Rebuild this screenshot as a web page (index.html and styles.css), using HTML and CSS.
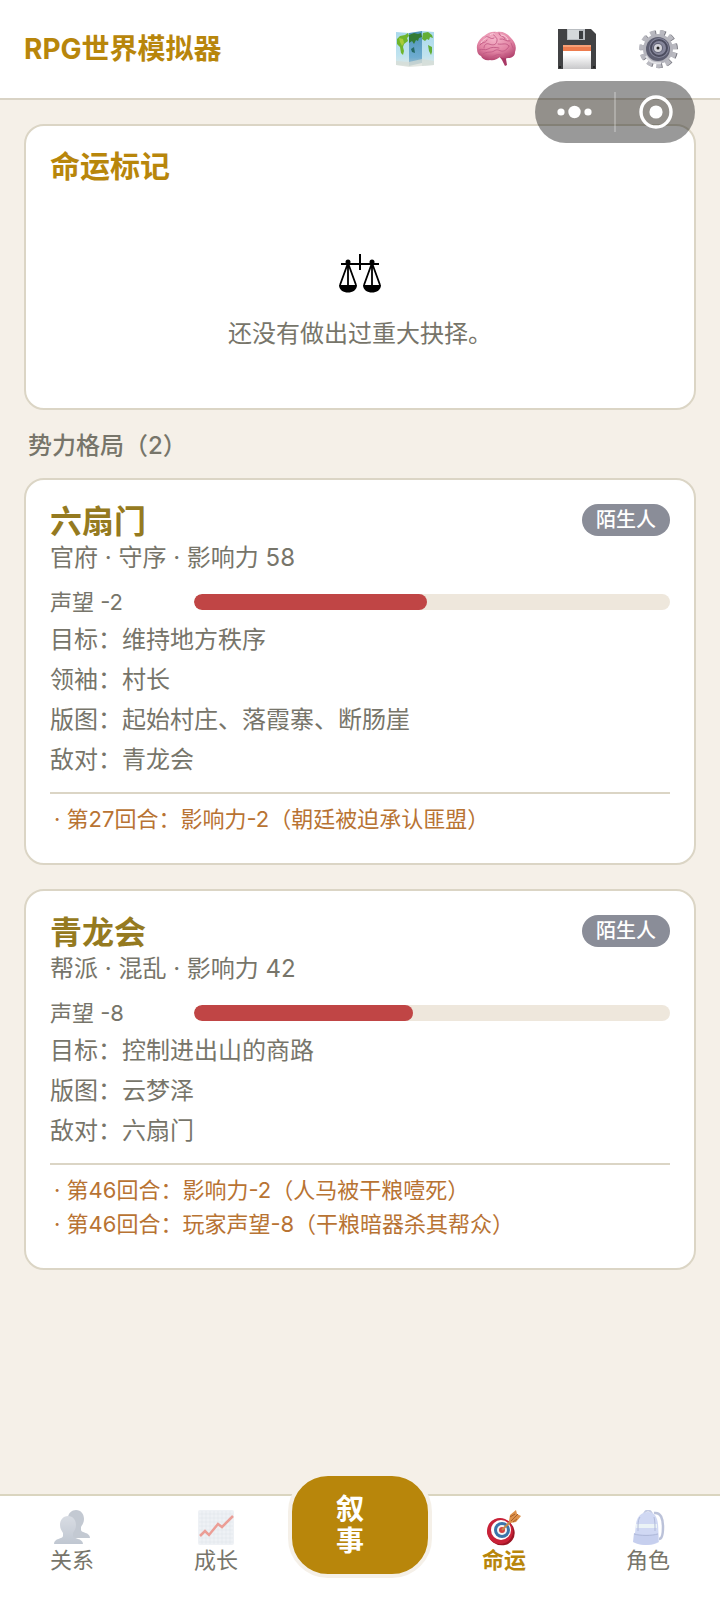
FILE: index.html
```
<!DOCTYPE html>
<html lang="zh-CN">
<head>
  <meta charset="UTF-8" />
  <meta name="viewport" content="width=device-width, initial-scale=1.0"/>
  <title>RPG世界模拟器</title>
  <link rel="stylesheet" href="styles.css">
</head>
<body>

  <!-- Mini program capsule -->
  <div class="capsule">
    <button class="capsule-btn" aria-label="更多">
      <svg width="48" height="40" viewBox="0 0 48 40" fill="#fff">
        <circle cx="10" cy="20" r="3.6"/><circle cx="23.5" cy="20" r="6.2"/><circle cx="37" cy="20" r="3.6"/>
      </svg>
    </button>
    <span class="capsule-line"></span>
    <button class="capsule-btn" aria-label="关闭">
      <svg width="40" height="40" viewBox="0 0 40 40">
        <circle cx="20" cy="20" r="15" fill="none" stroke="#fff" stroke-width="3.4"/>
        <circle cx="20" cy="20" r="6.6" fill="#fff"/>
      </svg>
    </button>
  </div>

  <header class="header">
    <h1>RPG世界模拟器</h1>
    <div class="tools">
      <button class="tool-btn" aria-label="地图">
        <svg width="40" height="40" viewBox="0 0 40 40">
          <defs>
            <linearGradient id="sea" x1="0" y1="0" x2="0" y2="1">
              <stop offset="0" stop-color="#a9d9ec"/><stop offset=".7" stop-color="#c0e3ef"/><stop offset="1" stop-color="#dfe8e6"/>
            </linearGradient>
            <linearGradient id="fold" x1="0" y1="0" x2="0" y2="1">
              <stop offset="0" stop-color="#4d93b8"/><stop offset=".75" stop-color="#6eacd0"/><stop offset="1" stop-color="#adc3ca"/>
            </linearGradient>
          </defs>
          <path d="M1 3 14 4v33L1 36zM27 2l12 1v33l-12 1z" fill="url(#sea)"/>
          <path d="m14 4 13-2v32l-13 3z" fill="url(#fold)"/>
          <path d="m2 10 3-3 5-1 3-2 1 3-2 2 1 3-4 3-1 3 1 4-1 4-2-2-1-6-3-3z" fill="#6fb52c"/>
          <path d="m4 9 4 1 1 4-2 3-2-4z" fill="#a7cc38"/>
          <path d="m14 6 5-2 4 1 3-1 1 4-3 1-1 3-2-1-2 4-2-3-3 2z" fill="#337b35"/>
          <path d="m16 20 3-2 1 6-3-1z" fill="#266a66"/>
          <path d="m28 4 5-1 4 3 1 3-3-1-1 3-2-1-2 2-3-2zM33 16l4 2v5l-1 3-2-4z" fill="#63ae35"/>
          <path d="m1 32 13 1 13-3 12 2v4l-12 1-13 1-13-2z" fill="#d5dbd4" opacity=".7"/>
        </svg>
      </button>
      <button class="tool-btn" aria-label="记忆">
        <svg width="40" height="40" viewBox="0 0 40 40">
          <defs>
            <radialGradient id="brain" cx=".45" cy=".25" r=".75">
              <stop offset="0" stop-color="#f5b4c9"/><stop offset=".6" stop-color="#e284a4"/><stop offset="1" stop-color="#b44670"/>
            </radialGradient>
          </defs>
          <path d="m23 27 8-1-1 4 1 6-2 1-3-6z" fill="#a83865"/>
          <path d="M1 20C0 15 4 9 8 7c4-4 9-5 13-4 6-1 11 2 14 6 4 4 6 9 4 14 0 4-3 6-7 6-3 1-6 0-8-1-3 2-6 4-10 3-4 1-8-1-9-4-3-1-4-4-4-7z" fill="url(#brain)"/>
          <g fill="none" stroke="#c25a84" stroke-width=".9" stroke-linecap="round">
            <path d="M4 16c3-4 5-1 7-5M10 8c4-1 4 3 8 1M18 4c-2 4 4 3 3 8s-5 4-8 3-5 1-5 4M23 4c0 4 5 2 6 6M24 10c4-1 6 3 10 2M22 15c5 1 8-2 11 2M3 21c4-2 6 1 9-1s7-2 11-1M7 25c4-3 8-1 11-3s4-1 7 0 7-2 8-5M13 29c4 0 7-5 12-3M29 25c3 1 6 0 8-3M35 14l2 5"/>
          </g>
          <path d="M5 14c2-4 6-4 6-6M14 6c2-2 4-1 5-1M25 6c4 0 6 3 7 5" fill="none" stroke="#fbd0dd" stroke-width="1"/>
        </svg>
      </button>
      <button class="tool-btn" aria-label="存档">
        <svg width="40" height="40" viewBox="0 0 40 40">
          <defs>
            <linearGradient id="label" x1="0" y1="0" x2="0" y2="1">
              <stop offset="0" stop-color="#fff"/><stop offset=".4" stop-color="#fff"/><stop offset="1" stop-color="#c8c8ca"/>
            </linearGradient>
          </defs>
          <path d="M1 0h33l5 5v35H1z" fill="#414244"/>
          <path d="M10 0h18v11H10z" fill="#b9bdc1"/>
          <path d="M11 1h11v9H11z" fill="#d5d9db"/>
          <path d="M22 2h4v8h-4z" fill="#3a3d40"/>
          <path d="M6 16h28v24H6z" fill="url(#label)"/>
          <path d="M6 16h28v6H6z" fill="#ed7c4e"/>
          <path d="M6 16h28v2H6z" fill="#f6a077"/>
          <path d="M2 37h2v2H2zM36 37h2v2h-2z" fill="#222"/>
        </svg>
      </button>
      <button class="tool-btn" aria-label="设置">
        <svg width="40" height="40" viewBox="0 0 40 40">
          <g transform="rotate(12 20 20)">
            <circle cx="21" cy="20" r="16" fill="none" stroke="#77777f" stroke-width="6" stroke-dasharray="5 4.14" />
            <circle cx="20" cy="20" r="16" fill="none" stroke="#b9b9c0" stroke-width="6" stroke-dasharray="5 4.14" />
          </g>
          <circle cx="20" cy="20" r="15" fill="#b4b4bc"/>
          <circle cx="20" cy="20" r="12" fill="#5d5e70"/>
          <circle cx="21" cy="19" r="10" fill="#85869a"/>
          <circle cx="21" cy="19" r="8" fill="none" stroke="#4b4c5e" stroke-width="2"/>
          <circle cx="20" cy="19" r="5" fill="#626376"/>
          <circle cx="20" cy="19" r="4" fill="#d4d4da"/>
          <circle cx="20" cy="19" r="1.5" fill="#222"/>
          <path d="M8 27c3 6 9 8 15 7" fill="none" stroke="#e0e0e4" stroke-width="2"/>
        </svg>
      </button>
    </div>
  </header>

  <main class="content">
    <section class="card">
      <h2>命运标记</h2>
      <div class="empty">
        <svg width="42" height="40" viewBox="0 0 42 40">
          <g fill="none" stroke="#000" stroke-width="2">
            <path d="M2 10h38M21 0v16"/>
            <path d="M9 9 1 31M9 9v22M9 9l8 22M33 9l-8 22M33 9v22M33 9l8 22" stroke-width="1.8"/>
          </g>
          <circle cx="9" cy="8" r="2.5"/><circle cx="33" cy="8" r="2.5"/>
          <path d="M0 31h18c0 10-18 10-18 0zM24 31h18c0 10-18 10-18 0z"/>
        </svg>
        <p>还没有做出过重大抉择。</p>
      </div>
    </section>

    <h2 class="section-title">势力格局（2）</h2>

    <!-- Factions -->
    <div class="faction-list">
      <article class="card">
        <div class="faction-head">
          <h3>六扇门</h3>
          <span class="badge">陌生人</span>
        </div>
        <p class="meta">官府 · 守序 · 影响力 58</p>
        <div class="rep">
          <span class="rep-label">声望 -2</span>
          <div class="rep-bar"><div class="rep-fill" style="width: 49%"></div></div>
        </div>
        <p class="info">目标：维持地方秩序</p>
        <p class="info">领袖：村长</p>
        <p class="info">版图：起始村庄、落霞寨、断肠崖</p>
        <p class="info">敌对：青龙会</p>
        <div class="log">
          <p>· 第27回合：影响力-2（朝廷被迫承认匪盟）</p>
        </div>
      </article>

      <article class="card">
        <div class="faction-head">
          <h3>青龙会</h3>
          <span class="badge">陌生人</span>
        </div>
        <p class="meta">帮派 · 混乱 · 影响力 42</p>
        <div class="rep">
          <span class="rep-label">声望 -8</span>
          <div class="rep-bar"><div class="rep-fill" style="width: 46%"></div></div>
        </div>
        <p class="info">目标：控制进出山的商路</p>
        <p class="info">版图：云梦泽</p>
        <p class="info">敌对：六扇门</p>
        <div class="log">
          <p>· 第46回合：影响力-2（人马被干粮噎死）</p>
          <p>· 第46回合：玩家声望-8（干粮暗器杀其帮众）</p>
        </div>
      </article>
    </div>
  </main>

  <nav class="tabbar">
    <button class="tab">
      <svg width="36" height="36" viewBox="0 0 36 36">
        <defs>
          <linearGradient id="person" x1="0" y1="0" x2="0" y2="1">
            <stop offset="0" stop-color="#b3bbc9"/><stop offset="1" stop-color="#8290a5"/>
          </linearGradient>
        </defs>
        <path d="M22 0c5 0 8 4 8 9 0 4-2 6-3 8v3c0 3 9 2 9 8H18L14 8c0-5 4-8 8-8z" fill="#8994a7"/>
        <path d="M14 6c5 0 8 4 8 9 0 4-2 6-3 8v3c0 3 10 2 10 8H0c0-6 9-5 9-8v-3c-1-2-3-4-3-8 0-5 3-9 8-9z" fill="url(#person)"/>
      </svg>
      <span>关系</span>
    </button>
    <button class="tab">
      <svg width="36" height="36" viewBox="0 0 36 36">
        <rect width="36" height="35" rx="2" fill="#dfe5ed"/>
        <path d="M4 1v33M8 1v33M12 1v33M16 1v33M20 1v33M24 1v33M28 1v33M32 1v33M1 4h34M1 8h34M1 12h34M1 16h34M1 20h34M1 24h34M1 28h34M1 32h34" stroke="#c3ccd9" stroke-width=".6"/>
        <path d="m2 26 5-5 4 4 9-11 4 3L35 6" fill="none" stroke="#d93f30" stroke-width="2.5"/>
      </svg>
      <span>成长</span>
    </button>
    <button class="tab-main">叙<br>事</button>
    <button class="tab active">
      <svg width="36" height="36" viewBox="0 0 36 36">
        <ellipse cx="15" cy="22" rx="14" ry="13" transform="rotate(35 15 22)" fill="#9b1525"/>
        <circle cx="14" cy="21" r="13" fill="#c92238"/>
        <circle cx="15" cy="20" r="10" fill="#fff"/>
        <circle cx="16" cy="20" r="8" fill="#3b75aa"/>
        <circle cx="16" cy="20" r="5" fill="#f4f4f4"/>
        <circle cx="16" cy="20" r="3" fill="#d5413e"/>
        <path d="M16 20 29 7" stroke="#c48a4c" stroke-width="2"/>
        <path d="m23 11 1-6 6-5 1 4 4 2-5 6-6 1z" fill="#dd914b"/>
        <path d="m25 11 7-7M24 7l5-3M27 12l4-3" stroke="#a85f29" stroke-width="1"/>
      </svg>
      <span>命运</span>
    </button>
    <button class="tab">
      <svg width="36" height="36" viewBox="0 0 36 36">
        <path d="M24 3c7-1 9 6 9 14s-1 12-4 12" fill="none" stroke="#7a87b5" stroke-width="2.5"/>
        <path d="M14 5c0-6 8-6 8 0" fill="none" stroke="#8694c4" stroke-width="2"/>
        <path d="M6 14C7 6 12 2 18 2s9 4 10 12l1 18c-6 4-18 4-25 0z" fill="#a3b3e8"/>
        <path d="M6 14h21v4H6z" fill="#d9e9ef"/>
        <path d="M4 23c7 2 17 2 24 0v9c-7 4-18 4-25 0z" fill="#8fa0df"/>
        <path d="M4 24c7 2 17 2 24 0M10 7c-2 3-2 6-2 14M24 7c1 4 1 8 1 14" fill="none" stroke="#6376b4" stroke-width="1"/>
      </svg>
      <span>角色</span>
    </button>
  </nav>

</body>
</html>
```
FILE: styles.css
```
* {
  box-sizing: border-box;
}

body {
  margin: 0;
  min-height: 100vh;
  display: flex;
  flex-direction: column;
  font-family: Inter, 'Noto Sans CJK SC', sans-serif;
  font-size: 24px;
  background: #f5f0e8;
  color: #77756a;
}

h1, h2, h3, p {
  margin: 0;
}

button {
  border: none;
  padding: 0;
  background: none;
  font-family: inherit;
  color: inherit;
  cursor: pointer;
}

svg {
  display: block;
}

/* header */
.header {
  display: flex;
  justify-content: space-between;
  align-items: center;
  height: 100px;
  padding: 0 24px;
  background: #fff;
  border-bottom: 2px solid #d9d3c5;
}

.header h1 {
  font-size: 28px;
  line-height: 40px;
  color: #b8860b;
}

.tools {
  display: flex;
  gap: 5px;
}

.tool-btn {
  display: flex;
  justify-content: center;
  width: 76px;
}

/* floats over the header and the first card */
.capsule {
  position: absolute;
  top: 81px;
  right: 25px;
  z-index: 10;
  display: flex;
  align-items: center;
  width: 160px;
  height: 62px;
  border-radius: 31px;
  background: rgba(0, 0, 0, 0.4);
}

.capsule-btn {
  flex: 1;
  display: flex;
  justify-content: center;
}

.capsule-line {
  width: 2px;
  height: 40px;
  background: rgba(255, 255, 255, 0.25);
}

/* content */
.content {
  flex: 1;
  padding: 24px;
}

.card {
  padding: 24px;
  background: #fff;
  border: 2px solid #dbd5c5;
  border-radius: 20px;
}

.card h2 {
  margin-bottom: 24px;
  font-size: 30px;
  line-height: 32px;
  color: #b8860b;
}

.empty {
  display: flex;
  flex-direction: column;
  align-items: center;
  gap: 22px;
  padding: 48px 0 32px;
  line-height: 36px;
}

.section-title {
  margin: 20px 0 16px;
  padding: 0 4px;
  font-size: 24px;
  font-weight: 500;
  line-height: 32px;
}

.faction-list {
  display: flex;
  flex-direction: column;
  gap: 24px;
}

.faction-head {
  display: flex;
  justify-content: space-between;
  align-items: flex-start;
}

.faction-head h3 {
  font-size: 32px;
  line-height: 36px;
  color: #957a20;
}

.badge {
  padding: 0 14px;
  border-radius: 16px;
  background: #8a8d98;
  color: #fff;
  font-size: 20px;
  font-weight: 500;
  line-height: 32px;
}

.meta {
  line-height: 36px;
}

.rep {
  display: flex;
  align-items: center;
  gap: 12px;
  margin-top: 8px;
}

.rep-label {
  width: 132px;
  font-size: 22px;
  line-height: 36px;
}

.rep-bar {
  flex: 1;
  height: 16px;
  border-radius: 8px;
  background: #eee7dc;
  overflow: hidden;
}

.rep-fill {
  height: 100%;
  border-radius: 8px;
  background: #c04545;
}

.info {
  line-height: 40px;
}

.log {
  margin-top: 12px;
  padding: 8px 4px 3px;
  border-top: 2px solid #dbd5c5;
  font-size: 22px;
  line-height: 34px;
  color: #b87333;
}

/* bottom tabs */
.tabbar {
  position: sticky;
  bottom: 0;
  display: grid;
  grid-template-columns: repeat(5, 1fr);
  align-items: start;
  height: 106px;
  background: #fff;
  border-top: 2px solid #dad5bf;
}

.tab {
  display: flex;
  flex-direction: column;
  align-items: center;
  padding-top: 14px;
  font-size: 22px;
  line-height: 28px;
}

.tab svg {
  opacity: 0.5;
}

.tab.active {
  color: #b8860b;
  font-weight: bold;
}

.tab.active svg {
  opacity: 1;
}

.tab-main {
  height: 106px;
  margin-top: -24px;
  padding-left: 44px;
  border: 4px solid #f5f0e8;
  border-radius: 40px;
  background: #b8860b;
  color: #fff;
  font-size: 28px;
  font-weight: bold;
  line-height: 32px;
  text-align: left;
}
```
